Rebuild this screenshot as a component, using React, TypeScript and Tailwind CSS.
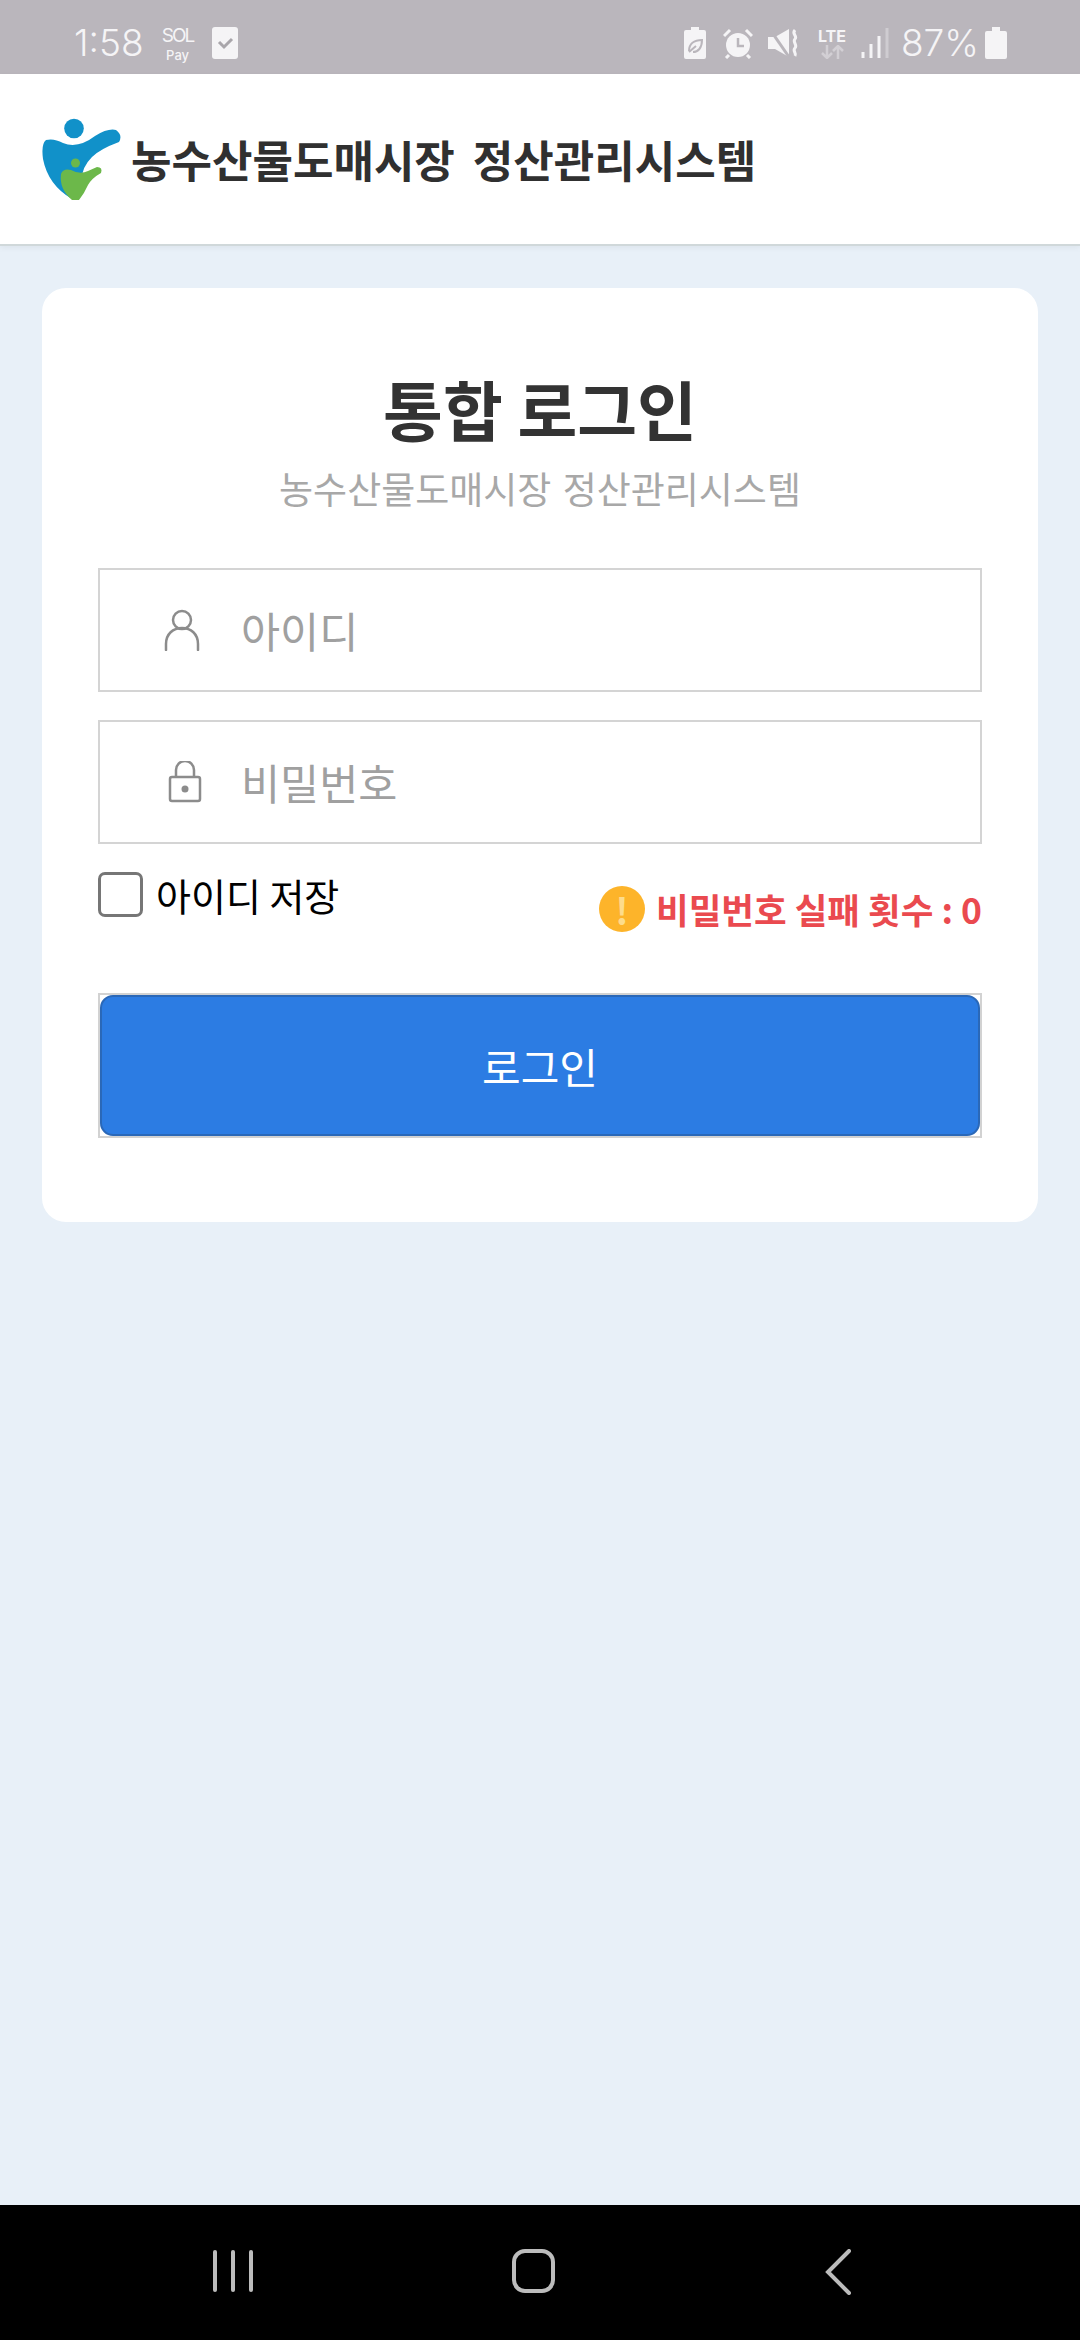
import React from 'react'

const StatusBar = () => {
  return (
    <div
      className="flex h-[74px] items-end justify-between bg-[#bab6bc] pb-[9px] pl-[74px] pr-[73px] text-[#f5f4f6]"
      style={{ fontFamily: 'Inter, Roboto, sans-serif' }}
    >
      <div className="flex items-center">
        <span className="text-[37px] font-light leading-[44px]">1:58</span>
        <div className="ml-[16px] flex w-[36px] flex-col items-center">
          <span className="text-[19px] font-normal leading-[23px] tracking-[-2px]">SOL</span>
          <span className="text-[13px] font-medium leading-[16px]">Pay</span>
        </div>
        <div className="ml-[16px] flex h-[32px] w-[26px] items-center justify-center rounded-[3px] bg-[#f5f4f6]">
          <svg width="18" height="14" viewBox="0 0 18 14" fill="none" stroke="#a9a6ab" strokeWidth="3">
            <path d="M3 6l5 5 8-8" />
          </svg>
        </div>
      </div>
      <div className="flex items-center">
        <svg width="22" height="32" viewBox="0 0 22 32" fill="#f5f4f6">
          <path d="M7 0h8v3h5a2 2 0 0 1 2 2v25a2 2 0 0 1-2 2H2a2 2 0 0 1-2-2V5a2 2 0 0 1 2-2h5z" />
          <path d="M5 24c0-7 5-11 13-11 0 8-4 12-9 12M5 25l7-6" fill="none" stroke="#bab6bc" strokeWidth="2" />
        </svg>
        <svg className="ml-[17px]" width="30" height="31" viewBox="0 0 30 31" fill="#f5f4f6">
          <circle cx="15" cy="17" r="12" />
          <path d="M15 10v8h6" fill="none" stroke="#bab6bc" strokeWidth="2.5" />
          <path d="M1 8l6-6M29 8l-6-6M6 27l-3 3M24 27l3 3" fill="none" stroke="#f5f4f6" strokeWidth="3" />
        </svg>
        <svg className="ml-[15px]" width="31" height="30" viewBox="0 0 31 30" fill="#f5f4f6">
          <path d="M0 9h7L21 1v28L7 21H0z" />
          <path d="M1 0l20 29" stroke="#bab6bc" strokeWidth="3" />
          <path d="M27 2c-4 4 3 6 0 9s3 6 0 9 2 5 0 8" fill="none" stroke="#f5f4f6" strokeWidth="3" />
        </svg>
        <div className="ml-[15px] flex w-[36px] flex-col items-center">
          <span className="text-[16px] font-bold leading-[18px]">LTE</span>
          <svg width="24" height="14" viewBox="0 0 24 14" fill="none" stroke="#d2cfd4" strokeWidth="2.5">
            <path d="M7 0v12M2 8l5 5 5-5M18 14V2M13 6l5-5 5 5" />
          </svg>
        </div>
        <svg className="ml-[11px]" width="28" height="30" viewBox="0 0 28 30" fill="none" strokeWidth="3">
          <path d="M2 24v6" stroke="#f5f4f6" />
          <path d="M10 16v14" stroke="#f5f4f6" />
          <path d="M18 8v22" stroke="#f5f4f6" />
          <path d="M26 0v30" stroke="#cfccd1" />
        </svg>
        <span className="ml-[12px] text-[37px] font-light leading-[44px]">87%</span>
        <svg className="ml-[6px]" width="22" height="32" viewBox="0 0 22 32" fill="#f5f4f6">
          <path d="M7 0h8v4h5a2 2 0 0 1 2 2v24a2 2 0 0 1-2 2H2a2 2 0 0 1-2-2V6a2 2 0 0 1 2-2h5z" />
        </svg>
      </div>
    </div>
  )
}

const Logo = () => {
  return (
    <svg width="80" height="82" viewBox="41 119 80 82">
      <circle cx="74" cy="129.500" r="9.800" fill="#1191c9" />
      <path
        d="M46 141 Q54 139 63 144 Q78 150 95 137 Q108 129 116 131 Q123 136 119 143 Q100 150 92 158 Q80 170 82 185 L72 200 Q48 186 43 160 Q41 145 46 141z"
        fill="#1191c9"
      />
      <circle cx="75.500" cy="164" r="4.500" fill="#6cb84a" />
      <path
        d="M61 175 Q63 169 71 171 Q80 176 88 172 L97 168 Q103 168 101 174 Q92 179 88 186 Q84 195 79 201 L72 201 Q59 190 61 175z"
        fill="#6cb84a"
      />
    </svg>
  )
}

const App = () => {
  return (
    <div
      className="flex h-[2340px] flex-col bg-[#e8f0f8]"
      style={{ fontFamily: '"Noto Sans CJK KR", Roboto, sans-serif' }}
    >
      <StatusBar />

      <header className="flex h-[172px] items-center border-b-2 border-[#d0d8da] bg-white pl-[41px] shadow-[0_2px_6px_rgba(0,0,0,0.05)]">
        <Logo />
        <span className="ml-[10px] text-[44px] font-bold leading-none text-[#303030] [word-spacing:8px]">농수산물도매시장 정산관리시스템</span>
      </header>

      <main className="flex-1 px-[42px] pt-[42px]">
        <div className="flex h-[934px] flex-col rounded-[24px] bg-white px-[56px] pt-[75px]">
          <h1 className="text-center text-[65px] font-bold leading-[90px] text-[#333333]">통합 로그인</h1>
          <p className="mt-[8px] text-center text-[37px] leading-[54px] text-[#a8a8a8] [word-spacing:3px]">농수산물도매시장 정산관리시스템</p>

          <div className="mt-[53px] flex h-[124px] items-center border-2 border-[#d4d4d4] pl-[64px]">
            <svg width="36" height="42" viewBox="0 0 36 42" fill="none" stroke="#8c8c8c" strokeWidth="2.500" strokeLinecap="round">
              <circle cx="18" cy="11" r="9" />
              <path d="M2 41v-6c0-10 7-16 16-16s16 6 16 16v6" />
            </svg>
            <input
              className="ml-[41px] w-[600px] bg-transparent text-[42.5px] outline-none placeholder:text-[#a0a0a0]"
              placeholder="아이디"
            />
          </div>

          <div className="mt-[28px] flex h-[124px] items-center border-2 border-[#d4d4d4] pl-[68px]">
            <svg width="34" height="42" viewBox="0 0 34 42" fill="none" stroke="#8c8c8c" strokeWidth="2.500">
              <path d="M8 16V9a9 9 0 0 1 18 0v7" />
              <rect x="2" y="16" width="30" height="24" rx="2" />
              <circle cx="17" cy="28" r="3.500" fill="#8c8c8c" stroke="none" />
            </svg>
            <input
              type="text"
              className="ml-[39px] w-[600px] bg-transparent text-[42.5px] outline-none placeholder:text-[#a0a0a0]"
              placeholder="비밀번호"
            />
          </div>

          <div className="mt-[28px] flex items-start justify-between">
            <label className="flex items-center">
              <span className="h-[45px] w-[45px] rounded-[7px] border-[3px] border-[#767676] bg-white" />
              <span className="ml-[13px] text-[38px] leading-[45px] text-black">아이디 저장</span>
            </label>
            <div className="mt-[14px] flex items-center">
              <div className="flex h-[46px] w-[46px] items-center justify-center rounded-full bg-[#fdb42a] text-[36px] font-bold leading-none text-[#fddc8c]">
                !
              </div>
              <span className="ml-[11px] text-[35.5px] font-bold leading-[46px] text-[#ea4a4f]">비밀번호 실패 횟수 : 0</span>
            </div>
          </div>

          <div className="mt-[61px] h-[145px] border-2 border-[#d2d2d2]">
            <button className="h-full w-full rounded-[13px] border-2 border-[#2a68b8] bg-[#2c7ce3] text-[42px] text-white">
              로그인
            </button>
          </div>
        </div>
      </main>

      <nav className="flex h-[135px] items-start bg-black">
        <div className="ml-[213px] mt-[45px] flex gap-[14px]">
          <div className="h-[42px] w-[4px] rounded-full bg-[#bcbcbc]" />
          <div className="h-[42px] w-[4px] rounded-full bg-[#bcbcbc]" />
          <div className="h-[42px] w-[4px] rounded-full bg-[#bcbcbc]" />
        </div>
        <div className="ml-[259px] mt-[44px] h-[44px] w-[43px] rounded-[13px] border-[4px] border-[#bcbcbc]" />
        <svg className="ml-[269px] mt-[44px]" width="27" height="46" viewBox="0 0 27 46" fill="none" stroke="#bcbcbc" strokeWidth="4" strokeLinecap="round">
          <path d="M25 2L4 23l21 21" />
        </svg>
      </nav>
    </div>
  )
}

export default App
